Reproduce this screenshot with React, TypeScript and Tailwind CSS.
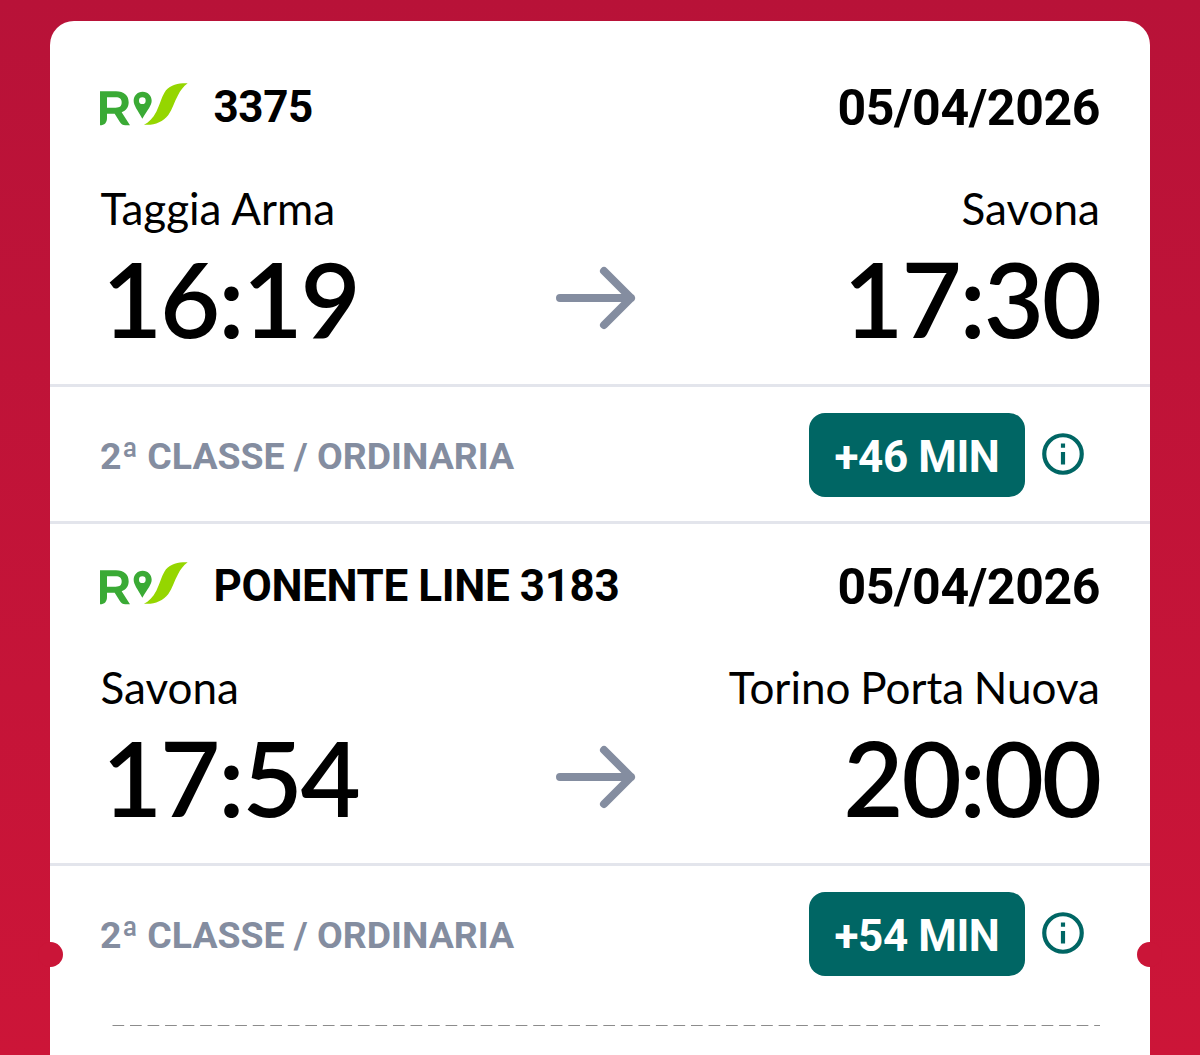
type Leg = {
    train: string;
    date: string;
    from: string;
    to: string;
    departure: string;
    arrival: string;
    fare: string;
    delay: string;
};

const LEGS: Leg[] = [
    {
        train: '3375',
        date: '05/04/2026',
        from: 'Taggia Arma',
        to: 'Savona',
        departure: '16:19',
        arrival: '17:30',
        fare: '2ª CLASSE / ORDINARIA',
        delay: '+46 MIN',
    },
    {
        train: 'PONENTE LINE 3183',
        date: '05/04/2026',
        from: 'Savona',
        to: 'Torino Porta Nuova',
        departure: '17:54',
        arrival: '20:00',
        fare: '2ª CLASSE / ORDINARIA',
        delay: '+54 MIN',
    },
];

function RegionalLogo() {
    return (
        <svg className="mb-1 h-[43px] w-[88px] shrink-0" viewBox="0 0 264 129" fill="none">
            <path
                fill="#3aaa35"
                fillRule="evenodd"
                d="M0 25h48c24 0 38 12 38 33 0 15-8 25-21 30l25 39H76c-8 0-12-3-16-9L44 92H21v13c0 14-7 22-21 22V25zm21 18v31h26c12 0 18-5 18-15.500S59 43 47 43H21z"
            />
            <path
                fill="#3aaa35"
                fillRule="evenodd"
                d="M128 26c-16 0-27 12-27 27 0 14 11 27 26 54 16-27 28-40 28-54 0-15-11-27-27-27zm-1 17a10 10 0 1 1 0 20 10 10 0 0 1 0-20z"
            />
            <path
                fill="#95d600"
                d="M263 1C238 0 213 5 198 22C187 36 181 61 169 86C159 105 146 118 132 125C161 128 188 118 205 96C217 79 223 57 234 37C241 23 250 11 263 1z"
            />
        </svg>
    );
}

function Arrow() {
    return (
        <svg className="-ml-[4.500px] h-[64px] w-[82px]" viewBox="0 0 82 64" fill="none">
            <path
                d="M5 32h71M49 5l27 27-27 27"
                stroke="#848da0"
                strokeWidth="8"
                strokeLinecap="round"
                strokeLinejoin="round"
            />
        </svg>
    );
}

function InfoIcon() {
    return (
        <svg className="mb-px size-[50px]" viewBox="0 0 24 24" fill="none">
            <circle cx="12" cy="12" r="9" stroke="#006664" strokeWidth="2" />
            <path d="M11 7h2v2h-2zM11 11h2v6h-2z" fill="#006664" />
        </svg>
    );
}

function TicketLeg({ leg }: { leg: Leg }) {
    return (
        <section>
            <div className="h-[339px] px-[50px] pt-8">
                <div className="flex h-[58px] items-center justify-between font-['Roboto',sans-serif] font-bold">
                    <div className="flex items-center gap-[25.500px]">
                        <RegionalLogo />
                        <span className="pt-0.5 text-[44px] leading-none tracking-[-0.38px]">{leg.train}</span>
                    </div>
                    <span className="pt-[3px] text-[50px] leading-none tracking-[-0.4px]">{leg.date}</span>
                </div>
                <div className="mt-[46px] flex justify-between text-[44px] leading-[54px]">
                    <span className="pl-[0.500px]">{leg.from}</span>
                    <span className="[word-spacing:-1.500px]">{leg.to}</span>
                </div>
                <div className="mt-2 grid grid-cols-[1fr_82px_1fr] items-center text-[104px] leading-[110px] font-semibold tracking-[-2.200px]">
                    <span className="pl-0.5">{leg.departure}</span>
                    <Arrow />
                    <span className="text-right">{leg.arrival}</span>
                </div>
            </div>
            <div className="flex h-[137px] items-center justify-between border-t-[3px] border-[#e3e5ec] pr-[62.500px] pl-[50px] font-['Roboto',sans-serif]">
                <span className="pt-[5px] text-[37.400px] font-bold text-[#848da0]">{leg.fare}</span>
                <div className="flex items-center gap-[12.500px] pt-px">
                    <span className="flex h-[84px] w-[216px] items-center justify-center rounded-2xl bg-[#006664] pt-1 text-[44px] font-bold tracking-[-0.4px] text-white">
                        {leg.delay}
                    </span>
                    <InfoIcon />
                </div>
            </div>
        </section>
    );
}

export default function App() {
    return (
        <main className="h-[1055px] overflow-hidden bg-linear-to-b from-[#b81238] to-[#cc1538] px-[50px] pt-[21px] font-['Lato',sans-serif] text-black">
            <div className="relative h-[1060px] rounded-t-3xl bg-white pt-6">
                <div className="divide-y-[3px] divide-[#e3e5ec]">
                    {LEGS.map((leg) => (
                        <TicketLeg key={leg.train} leg={leg} />
                    ))}
                </div>

                {/* Tear line */}
                <svg className="mt-6 ml-[62px] block h-[3px] w-[988px]" fill="none">
                    <path d="M0.500 1.500H988" stroke="#8c8c8c" strokeWidth="1" strokeDasharray="11.700 5.830" />
                </svg>
                <span className="absolute top-[921px] -left-3 size-[25px] rounded-full bg-[#ca1538]" />
                <span className="absolute top-[921px] -right-3 size-[25px] rounded-full bg-[#ca1538]" />
            </div>
        </main>
    );
}
